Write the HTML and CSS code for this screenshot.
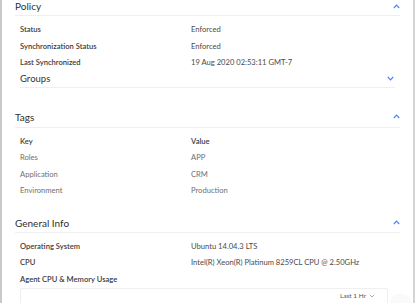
FILE: index.html
```html
<!DOCTYPE html>
<html lang="en">
<head>
    <meta charset="UTF-8">
    <meta name="viewport" content="width=device-width, initial-scale=1.0">
    <title>Agent Details</title>
    <link rel="stylesheet" href="styles.css">
</head>
<body>
    <div class="page">
        <div class="section">
            <div class="section-head">
                <span>Policy</span>
                <svg class="chevron" width="7" height="5" viewBox="0 0 7 5"><polyline points="0.8,4 3.5,1.2 6.2,4"/></svg>
            </div>
            <div class="rows">
                <div class="row"><span class="label">Status</span><span class="value">Enforced</span></div>
                <div class="row"><span class="label">Synchronization Status</span><span class="value">Enforced</span></div>
                <div class="row"><span class="label">Last Synchronized</span><span class="value">19 Aug 2020 02:53:11 GMT-7</span></div>
            </div>
            <div class="sub-head">
                <span>Groups</span>
                <svg class="chevron" width="7" height="5" viewBox="0 0 7 5"><polyline points="0.8,1 3.5,3.8 6.2,1"/></svg>
            </div>
        </div>

        <div class="section tags">
            <div class="section-head">
                <span>Tags</span>
                <svg class="chevron" width="7" height="5" viewBox="0 0 7 5"><polyline points="0.8,4 3.5,1.2 6.2,4"/></svg>
            </div>
            <div class="rows">
                <div class="row"><span class="label">Key</span><span class="label">Value</span></div>
                <div class="row light"><span>Roles</span><span>APP</span></div>
                <div class="row light"><span>Application</span><span>CRM</span></div>
                <div class="row light"><span>Environment</span><span>Production</span></div>
            </div>
        </div>

        <div class="section general">
            <div class="section-head">
                <span>General Info</span>
                <svg class="chevron" width="7" height="5" viewBox="0 0 7 5"><polyline points="0.8,4 3.5,1.2 6.2,4"/></svg>
            </div>
            <div class="rows">
                <div class="row"><span class="label">Operating System</span><span class="value">Ubuntu 14.04.3 LTS</span></div>
                <div class="row"><span class="label">CPU</span><span class="value">Intel(R) Xeon(R) Platinum 8259CL CPU @ 2.50GHz</span></div>
                <div class="row"><span class="label">Agent CPU &amp; Memory Usage</span></div>
            </div>
            <div class="usage-box">
                <span class="range">Last 1 Hr <svg class="small-chevron" width="6" height="4" viewBox="0 0 6 4"><polyline points="0.8,0.8 3,3 5.2,0.8"/></svg></span>
            </div>
        </div>
        <div class="fab"></div>
    </div>
</body>
</html>
```

FILE: styles.css
```css
body {
    margin: 0;
    padding: 0;
    background-color: #ffffff;
    font-family: 'Lato', 'Open Sans', sans-serif;
    overflow: hidden;
}
.page {
    position: relative;
    width: 415px;
    height: 303px;
    box-sizing: border-box;
    border-left: 2px solid #c9c9c9;
    border-right: 2px solid #d4d4d4;
    padding-right: 1px;
    overflow: hidden;
}
.section {
    padding: 0 12px 0 13px;
}
.section-head {
    display: flex;
    justify-content: space-between;
    align-items: center;
    height: 12px;
    padding-bottom: 3px;
    border-bottom: 1px solid #efefef;
    font-size: 10px;
    color: #2f2f2f;
}
.tags .section-head {
    padding-bottom: 4px;
}
.tags {
    margin-top: 23px;
}
.general {
    margin-top: 18px;
}
.chevron {
    fill: none;
    stroke: #4f86ee;
    stroke-width: 1.2;
}
.rows {
    padding: 5px 0 0 5px;
}
.row {
    display: grid;
    grid-template-columns: 171px 1fr;
    height: 16.5px;
    align-items: center;
    font-size: 7.6px;
}
.label {
    font-weight: 600;
    color: #3a3a3a;
}
.value {
    color: #4a4a4a;
}
.row.light {
    color: #707070;
}
.sub-head {
    display: flex;
    justify-content: space-between;
    align-items: center;
    height: 16px;
    margin-left: 5px;
    margin-right: 5px;
    padding-right: 1px;
    border-bottom: 1px solid #efefef;
    font-size: 9.5px;
    color: #333333;
}
.usage-box {
    margin: 1px 12px 0 5px;
    height: 20px;
    border: 1px solid #efefef;
    border-radius: 2px;
    display: flex;
    justify-content: flex-end;
    align-items: flex-start;
    padding: 3px 12px 0 0;
}
.range {
    font-size: 6.5px;
    line-height: 7px;
    color: #555555;
    display: flex;
    align-items: center;
    gap: 3px;
}
.small-chevron {
    fill: none;
    stroke: #999999;
    stroke-width: 0.8;
}
.fab {
    position: absolute;
    right: 2px;
    bottom: -12px;
    width: 20px;
    height: 20px;
    border-radius: 50%;
    background: #fafafa;
    box-shadow: 0 0 3px rgba(0,0,0,0.08);
}
```
